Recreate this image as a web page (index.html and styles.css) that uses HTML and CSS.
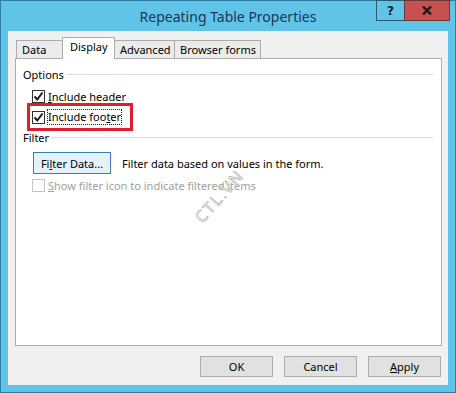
FILE: index.html
```html
<!DOCTYPE html>
<html lang="en">
<head>
  <meta charset="UTF-8">
  <title>Repeating Table Properties</title>
  <link rel="stylesheet" href="styles.css">
</head>
<body>

<div class="window">
  <div class="titlebar">
    <span class="title">Repeating Table Properties</span>
    <div class="caption-buttons">
      <button class="cap help">?</button>
      <button class="cap close">
        <svg width="10" height="9" viewBox="0 0 10 9"><path d="M1 0.5 L9 8.5 M9 0.5 L1 8.5" stroke="#1a1a1a" stroke-width="2.4"/></svg>
      </button>
    </div>
  </div>

  <div class="client">
    <div class="tabs">
      <div class="tab tab-data">Data</div>
      <div class="tab tab-display active">Display</div>
      <div class="tab tab-advanced">Advanced</div>
      <div class="tab tab-browser">Browser forms</div>
    </div>

    <div class="panel">
      <div class="group-title"><span>Options</span><i class="rule"></i></div>
      <div class="check-row first">
        <span class="box checked">
          <svg width="11" height="11" viewBox="0 0 11 11"><path d="M1.5 5.5 L4.3 8.5 L9.5 1.5" fill="none" stroke="#1a1a1a" stroke-width="2"/></svg>
        </span>
        <span><u>I</u>nclude header</span>
      </div>
      <div class="highlight">
        <div class="check-row">
          <span class="box checked">
            <svg width="11" height="11" viewBox="0 0 11 11"><path d="M1.5 5.5 L4.3 8.5 L9.5 1.5" fill="none" stroke="#1a1a1a" stroke-width="2"/></svg>
          </span>
          <span class="focus">Include foo<u>t</u>er</span>
        </div>
      </div>

      <div class="group-title filter-title"><span>Filter</span><i class="rule"></i></div>
      <div class="filter-row">
        <button class="btn primary">Fi<u>l</u>ter Data...</button>
        <span>Filter data based on values in the form.</span>
      </div>
      <div class="check-row disabled">
        <span class="box"></span>
        <span><u>S</u>how filter icon to indicate filtered items</span>
      </div>

      <div class="watermark">CTL.VN</div>
    </div>

    <div class="actions">
      <button class="btn">OK</button>
      <button class="btn">Cancel</button>
      <button class="btn"><u>A</u>pply</button>
    </div>
  </div>
</div>

</body>
</html>
```

FILE: styles.css
```css
body {
  margin: 0;
  padding: 0;
  font-family: "Noto Sans", "Open Sans", sans-serif;
  font-size: 11px;
  color: #000;
}
.window {
  width: 456px;
  height: 393px;
  box-sizing: border-box;
  background-color: #5fc4e8;
  border: 1px solid #2c7da3;
  display: flex;
  flex-direction: column;
}
.titlebar {
  height: 30px;
  position: relative;
  display: flex;
  align-items: center;
  justify-content: center;
}
.title {
  font-size: 14px;
  color: #1d3557;
  margin-top: 1px;
}
.caption-buttons {
  position: absolute;
  top: -1px;
  right: 5px;
  display: flex;
}
.cap {
  height: 21px;
  border: 1px solid #2b5a75;
  padding: 0;
  margin: 0;
  display: flex;
  align-items: center;
  justify-content: center;
}
.help {
  width: 28px;
  background-color: #5fc4e8;
  border-right: none;
  font-family: "DejaVu Sans", sans-serif;
  font-weight: bold;
  font-size: 12px;
  color: #1a1a1a;
}
.close {
  width: 46px;
  background-color: #c75050;
  border-color: #6e3737;
}
.client {
  flex: 1;
  margin: 0 7px 7px 7px;
  background-color: #f0f0f0;
  display: flex;
  flex-direction: column;
  padding: 6px 6px 0 7px;
}
.tabs {
  display: flex;
  align-items: flex-end;
  padding-left: 1px;
  height: 21px;
  position: relative;
  z-index: 1;
}
.tab {
  height: 18px;
  box-sizing: border-box;
  border: 1px solid #acacac;
  border-bottom: none;
  background-color: #ebebeb;
  padding: 1px 0 0 5px;
  margin-right: -1px;
  line-height: 16px;
}
.tab-data { width: 47px; }
.tab-display { width: 53px; }
.tab-advanced { width: 61px; }
.tab-browser { width: 87px; }
.tab.active {
  height: 22px;
  background-color: #fff;
  padding: 0 0 0 7px;
  line-height: 18px;
  margin-bottom: -1px;
}
.panel {
  height: 288px;
  box-sizing: border-box;
  background-color: #fff;
  border: 1px solid #acacac;
  padding: 7px 8px 0 7px;
  position: relative;
}
.group-title {
  display: flex;
  align-items: center;
  height: 16px;
}
.group-title .rule {
  flex: 1;
  border-top: 1px solid #dcdcdc;
  margin-left: 2px;
  margin-top: 1px;
}
.filter-title {
  margin-top: -2px;
}
.check-row {
  display: flex;
  align-items: center;
  height: 16px;
  padding-left: 9px;
}
.check-row.first {
  margin-top: 6px;
}
.check-row .box {
  width: 13px;
  height: 13px;
  box-sizing: border-box;
  border: 1px solid #333;
  background-color: #fff;
  margin-right: 3px;
  display: flex;
  align-items: center;
  justify-content: center;
}
.highlight {
  width: 106px;
  height: 28px;
  box-sizing: border-box;
  margin: -1px 0 0 4px;
  border: 3px solid #e01e2b;
  display: flex;
  align-items: center;
}
.highlight .check-row {
  padding-left: 2px;
}
.focus {
  outline: 1px dotted #222;
  line-height: 14px;
}
.filter-row {
  display: flex;
  align-items: center;
  gap: 11px;
  padding-left: 10px;
  margin-top: 7px;
  height: 22px;
}
.btn {
  font-family: inherit;
  font-size: 11px;
  width: 73px;
  height: 21px;
  box-sizing: border-box;
  background-color: #e1e1e1;
  border: 1px solid #adadad;
  padding: 0;
  color: #000;
}
.btn.primary {
  width: 78px;
  height: 22px;
  background-color: #e5f1fb;
  border-color: #3c7fb1;
}
.check-row.disabled {
  color: #a0a0a0;
  margin-top: 3px;
}
.check-row.disabled .box {
  border-color: #c4c4c4;
}
.watermark {
  position: absolute;
  left: 171px;
  top: 126px;
  font-size: 16px;
  letter-spacing: 2px;
  color: #fff;
  -webkit-text-stroke: 0.7px #b4b4b4;
  transform: rotate(-48deg);
}
.actions {
  display: flex;
  justify-content: flex-end;
  gap: 11px;
  padding: 10px 1px 0 0;
}
```
